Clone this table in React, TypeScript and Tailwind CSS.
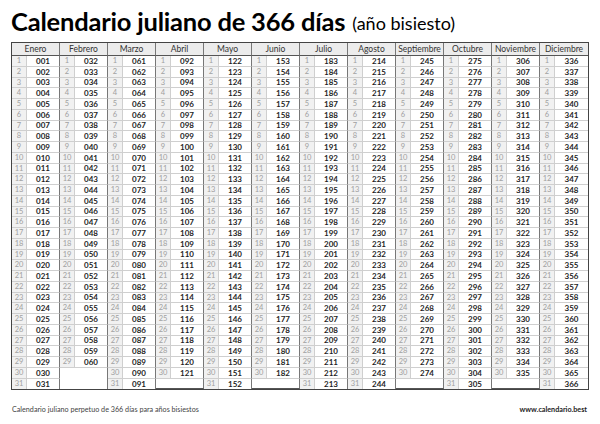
const MONTHS: [string, number][] = [
  ["Enero", 31],
  ["Febrero", 29],
  ["Marzo", 31],
  ["Abril", 30],
  ["Mayo", 31],
  ["Junio", 30],
  ["Julio", 31],
  ["Agosto", 31],
  ["Septiembre", 30],
  ["Octubre", 31],
  ["Noviembre", 30],
  ["Diciembre", 31],
];

const starts: number[] = [];
let acc = 1;
for (const [, n] of MONTHS) {
  starts.push(acc);
  acc += n;
}

export default function App() {
  const cells: JSX.Element[] = [];

  MONTHS.forEach(([name], m) => {
    cells.push(
      <div
        key={"h" + m}
        className={
          "col-span-2 flex items-center justify-center bg-[#ececec] border-b border-[#555] text-[8.5px] text-[#333] leading-none " +
          (m < 11 ? "border-r border-r-[#777]" : "")
        }
      >
        {name}
      </div>
    );
  });

  for (let d = 1; d <= 31; d++) {
    MONTHS.forEach(([, len], m) => {
      const last = m === 11;
      if (d > len) {
        // Febrero 30-31 is a single merged blank block
        if (m === 1 && d === 31) return;
        cells.push(
          <div
            key={d + "-" + m}
            className={
              "col-span-2 bg-white " +
              (m === 1 ? "row-span-2 " : "border-b border-[#555] ") +
              (last ? "" : "border-r border-r-[#777]")
            }
          />
        );
        return;
      }
      const bottom = d === 31 ? "" : "border-b border-[#cfcfcf] ";
      cells.push(
        <div
          key={d + "-" + m + "d"}
          className={
            "flex items-center justify-center bg-[#f1f1f1] border-r border-[#cfcfcf] text-[7.5px] text-[#a0a0a0] leading-none " +
            bottom
          }
        >
          {d}
        </div>
      );
      cells.push(
        <div
          key={d + "-" + m + "v"}
          className={
            "flex items-center justify-center bg-white text-[8px] font-bold text-[#1f1f1f] leading-none " +
            bottom +
            (last ? "" : "border-r border-r-[#777]")
          }
        >
          {String(starts[m] + d - 1).padStart(3, "0")}
        </div>
      );
    });
  }

  return (
    <div className="w-[600px] h-[424px] bg-white font-['Lato','Liberation_Sans',sans-serif] flex flex-col px-[11px]">
      <div className="h-[42px] flex items-center pt-[1px] gap-[7px]">
        <span className="text-[25.5px] font-bold text-black tracking-[-0.2px]">
          Calendario juliano de 366 días
        </span>
        <span className="text-[18px] text-black mt-[3px]">(año bisiesto)</span>
      </div>

      <div className="w-[578px] border border-[#444] grid grid-cols-[repeat(12,15px_33px)] grid-rows-[13px_repeat(31,10.75px)]">
        {cells}
      </div>

      <div className="flex items-center justify-between mt-[16px] text-[7.2px] leading-none">
        <span className="text-[#444] pl-[1px]">
          Calendario juliano perpetuo de 366 días para años bisiestos
        </span>
        <span className="font-bold text-[#222] pr-[2px]">www.calendario.best</span>
      </div>
    </div>
  );
}
